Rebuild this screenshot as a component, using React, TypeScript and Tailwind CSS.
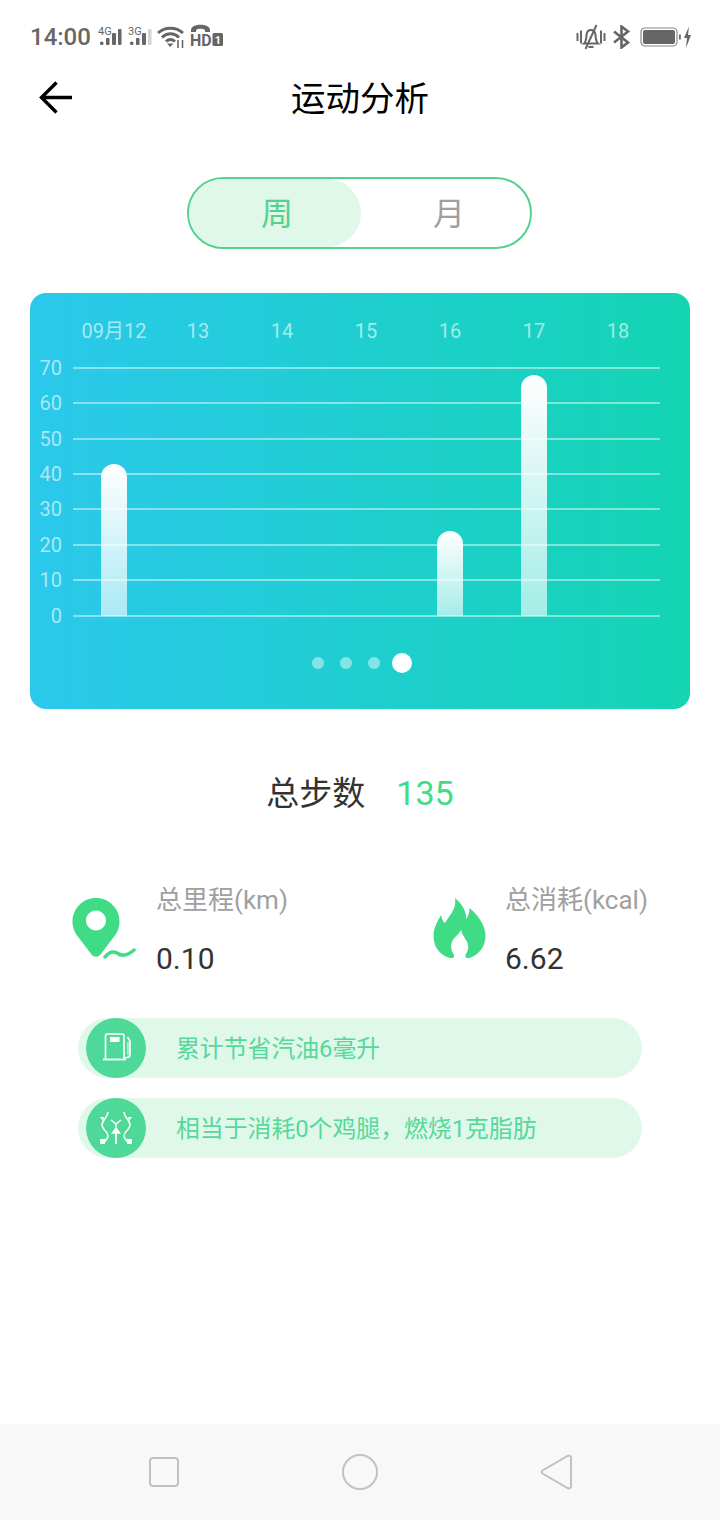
const font = "font-['Roboto','Noto_Sans_CJK_SC',sans-serif]";

const days = ['09月12', '13', '14', '15', '16', '17', '18'];
const ticks = ['70', '60', '50', '40', '30', '20', '10', '0'];
const bars = [152, 0, 0, 0, 85, 241, 0];

function Signal({ label, full }: { label: string; full: boolean }) {
  return (
    <svg width="26" height="20" viewBox="0 0 26 20">
      <text x="0" y="9" fontSize="11" fill="#666" fontFamily="Roboto">{label}</text>
      <rect x="2" y="15.500" width="3.500" height="3.500" rx="1.500" fill="#666" />
      <rect x="8" y="12" width="3.500" height="7" rx="1" fill="#666" />
      <rect x="14" y="7" width="4" height="12" rx="1" fill="#666" />
      <rect x="20" y="3" width="3.500" height="16" rx="1" fill={full ? '#666' : '#d4d4d4'} />
    </svg>
  );
}

function StatusBar() {
  return (
    <div className="h-[70px] pl-[30px] pr-[28px] pt-[4px] flex items-center justify-between">
      <div className="flex items-center">
        <span className="text-[24px] leading-none font-medium text-[#666]">14:00</span>
        <span className="ml-[7px] mt-[-3px] flex"><Signal label="4G" full /></span>
        <span className="ml-[4px] mt-[-3px] flex"><Signal label="3G" full={false} /></span>
        <svg className="ml-[3px] mt-[-1px]" width="28" height="22" viewBox="0 0 28 22" fill="none" stroke="#666" strokeWidth="3">
          <path d="M1 7C8 0.500 19 0.500 26 7" />
          <path d="M5 11.500C10 6.500 17 6.500 22 11.500" />
          <path d="M9 15.500C12 12.800 15 12.800 18 15.500" />
          <path d="M10 17.500h6.500L13.200 21z" fill="#666" stroke="none" />
          <path d="M21 14v8M25.500 14v8" strokeWidth="1.600" />
        </svg>
        <svg className="ml-[5px] mt-[-2px]" width="34" height="26" viewBox="0 0 34 26">
          <path d="M1 9V7C1 0 20 0 20 7V9h-5V7.500C15 5 6 5 6 7.500V9z" fill="#666" />
          <text x="0" y="22.500" fontSize="16" fontWeight="700" fill="#666" fontFamily="Roboto">HD</text>
          <rect x="22.500" y="10" width="10.500" height="13" rx="1.500" fill="#666" />
          <text x="24.800" y="21" fontSize="11" fontWeight="700" fill="#fff" fontFamily="Roboto">1</text>
        </svg>
      </div>
      <div className="flex items-center">
        <svg width="30" height="26" viewBox="0 0 30 26" fill="none" stroke="#666" strokeWidth="2">
          <path d="M1.500 9v8M5 6.500v13M25 6.500v13M28.500 9v8" />
          <path d="M8 19.500c2.500-2 2-5 2.600-9 .4-3 2.600-4.500 4.400-4.500s4 1.500 4.400 4.500c.6 4 .1 7 2.600 9z" />
          <path d="M12.500 23h5M20.500 1L9.500 25" />
        </svg>
        <svg className="ml-[6px]" width="20" height="24" viewBox="0 0 20 24" fill="none" stroke="#666" strokeWidth="2.600">
          <path d="M2 6.500L16 17.500L9.500 22.500V1.500L16 6.500L2 17.500" />
        </svg>
        <svg className="ml-[8px]" width="52" height="24" viewBox="0 0 52 24">
          <rect x="1" y="3" width="36" height="18" rx="4" fill="none" stroke="#888" strokeWidth="1.200" />
          <rect x="3" y="5" width="32" height="14" rx="2" fill="#666" />
          <rect x="39" y="9.500" width="1.800" height="5" fill="#666" />
          <path d="M49 1.500L44 13h3l-1 10l5-13h-3z" fill="#666" />
        </svg>
      </div>
    </div>
  );
}

function Header() {
  return (
    <div className="relative h-[56px] pt-[2px] flex items-center justify-center">
      <svg className="absolute left-[39px] top-[10px]" width="34" height="36" viewBox="0 0 34 36" fill="none" stroke="#000" strokeWidth="3.400">
        <path d="M33 17.500H3M17.500 2.500L2.500 17.500L17.500 32.500" />
      </svg>
      <span className="text-[34.500px] leading-none text-black">运动分析</span>
    </div>
  );
}

function Toggle() {
  return (
    <div className="mt-[51px] ml-[187px] w-[345px] h-[72px] rounded-full border-2 border-[#55d18e] flex overflow-hidden">
      <div className="w-[172px] pl-[4px] pt-[2px] rounded-[36px] bg-[#dff8ea] flex items-center justify-center text-[32px] text-[#55d18e]">周</div>
      <div className="flex-1 pl-[7px] pt-[2px] flex items-center justify-center text-[32px] text-[#a0a0a0]">月</div>
    </div>
  );
}

function Card() {
  return (
    <div className="mt-[44px] mx-[30px] h-[416px] rounded-[16px] bg-gradient-to-r from-[#2bc8ec] to-[#14d4b2] pt-[26px] flex flex-col">
      <div className="flex pl-[42px] h-[24px] items-center">
        {days.map((d) => (
          <span key={d} className="w-[84px] text-center text-[20px] leading-none text-white/60">{d}</span>
        ))}
      </div>
      <div className="relative mt-[7px]">
        {ticks.map((t) => (
          <div key={t} className="h-[35.430px] flex items-center">
            <span className="w-[32px] text-right text-[20px] leading-none text-white/60">{t}</span>
            <div className="ml-[11px] w-[587px] h-[2px] bg-white/45" />
          </div>
        ))}
        <div className="absolute left-[42px] bottom-[17.700px] flex items-end">
          {bars.map((h, i) => (
            <div key={i} className="w-[84px] flex justify-center">
              {h > 0 && (
                <div
                  className="w-[26px] rounded-t-[13px] bg-gradient-to-b from-white to-white/60"
                  style={{ height: h }}
                />
              )}
            </div>
          ))}
        </div>
      </div>
      <div className="mt-[20px] pl-[4px] flex justify-center items-center h-[20px]">
        <span className="w-[12px] h-[12px] rounded-full bg-white/45" />
        <span className="ml-[16px] w-[12px] h-[12px] rounded-full bg-white/45" />
        <span className="ml-[16px] w-[12px] h-[12px] rounded-full bg-white/45" />
        <span className="ml-[12px] w-[20px] h-[20px] rounded-full bg-white" />
      </div>
    </div>
  );
}

function PinIcon() {
  return (
    <svg width="64" height="64" viewBox="0 0 64 64">
      <path
        fillRule="evenodd"
        fill="#40dc85"
        d="M24 1C11 1 0.500 11.500 0.500 24.500C0.500 31 3 36.500 7 41L19.500 57.500C22 60.500 26 60.500 28.500 57.500L41 41C45 36.500 47.500 31 47.500 24.500C47.500 11.500 37 1 24 1ZM24 13.500C29.500 13.500 34 18 34 23.500S29.500 33.500 24 33.500S14 29 14 23.500S18.500 13.500 24 13.500Z"
      />
      <path d="M33 60C37 55 41 54 45 56C49 59 54 60 62 53" fill="none" stroke="#40dc85" strokeWidth="3.500" strokeLinecap="round" />
    </svg>
  );
}

function FlameIcon() {
  return (
    <svg width="54" height="62" viewBox="0 0 54 62">
      <path
        fillRule="evenodd"
        fill="#40dc85"
        d="M22 0C27 4 34 12 33 21C35 19 36.500 14 36.500 10C46 18 52.500 28 52.500 38C52.500 50 44 58 36 60C33 60.500 31.500 58.500 33 56C35 53 36 49 34.500 45C33 41 29.500 38 28 32C25.500 37 20 40 18.500 45C17.500 50 19 53.500 20.500 56C22 58.500 20.500 60.500 17.500 60C8 58 0.500 50 0.500 38C0.500 31 3 26 8 17C9 21 10 24 12 25C15 19 24 12 22 0Z"
      />
    </svg>
  );
}

function Stats() {
  return (
    <>
      <div className="mt-[60px] h-[48px] flex items-center justify-center">
        <span className="text-[33px] leading-none text-[#333]">总步数</span>
        <span className="ml-[31px] text-[34px] leading-none text-[#40dc85]">135</span>
      </div>
      <div className="mt-[65px] flex h-[110px]">
        <div className="w-[349px] pl-[72px] flex">
          <div className="pt-[15px]"><PinIcon /></div>
          <div className="ml-[20px] flex flex-col pt-[3px]">
            <span className="text-[26px] leading-[30px] text-[#a0a0a0]">总里程(km)</span>
            <span className="mt-[27px] text-[30px] leading-[34px] text-[#333]">0.10</span>
          </div>
        </div>
        <div className="flex-1 pl-[84px] flex">
          <div className="pt-[16px]"><FlameIcon /></div>
          <div className="ml-[18px] flex flex-col pt-[3px]">
            <span className="text-[26px] leading-[30px] text-[#a0a0a0]">总消耗(kcal)</span>
            <span className="mt-[27px] text-[30px] leading-[34px] text-[#333]">6.62</span>
          </div>
        </div>
      </div>
    </>
  );
}

function FuelIcon() {
  return (
    <svg width="32" height="32" viewBox="0 0 32 32" fill="none" stroke="#fff" strokeWidth="1.600">
      <path d="M5.500 27V4C5.500 2.800 6.300 2 7.500 2H22C23.200 2 24 2.800 24 4V27" />
      <path d="M3 27.500H26" strokeWidth="1.800" />
      <rect x="10" y="5" width="9.500" height="5" fill="#fff" stroke="none" />
      <path d="M24 25.500H27C29 25.500 30 24.500 30 22.500V9L27.500 5" />
      <path d="M26.800 10h3v13h-3z" fill="#fff" fillOpacity="0.5" stroke="none" />
    </svg>
  );
}

function BodyIcon() {
  return (
    <svg width="32" height="32" viewBox="0 0 32 32" fill="none" stroke="#fff" strokeWidth="1.500">
      <path d="M8 0C8 5 2 8 2 13C2 18 8 19 8 24C8 27 6 28 4 30" />
      <path d="M24 0C24 5 30 8 30 13C30 18 24 19 24 24C24 27 26 28 28 30" />
      <path d="M16 32V17" strokeWidth="1.800" />
      <path d="M12.500 21L16 16L19.500 21z" fill="#fff" />
      <path d="M11 8L16 12L21 8M16 12v3" />
      <path d="M0 5l4 0l-1 4zM32 5l-4 0l1 4zM0 27h5v5H0zM32 27h-5v5h5z" fill="#fff" stroke="none" />
    </svg>
  );
}

function Pill({ text, icon, className }: { text: string; icon: React.ReactNode; className?: string }) {
  return (
    <div className={`mx-[78px] w-[564px] h-[60px] rounded-full bg-[#dff8ea] flex items-center ${className ?? ''}`}>
      <div className="ml-[8px] w-[60px] h-[60px] rounded-full bg-[#4fd998] flex items-center justify-center">{icon}</div>
      <span className="ml-[30px] mt-[4px] text-[23.850px] leading-none text-[#55d89a]">{text}</span>
    </div>
  );
}

function NavBar() {
  return (
    <div className="mt-auto h-[96px] bg-[#f8f8f8] flex items-center pl-[149px]">
      <div className="w-[30px] h-[30px] rounded-[4px] border-2 border-[#c2c2c2]" />
      <div className="ml-[163px] w-[36px] h-[36px] rounded-full border-2 border-[#c2c2c2]" />
      <svg className="ml-[162px]" width="34" height="38" viewBox="0 0 34 38" fill="none" stroke="#c2c2c2" strokeWidth="2">
        <path d="M2.500 17.500L27.500 3C29.500 2 31 3 31 5V33C31 35 29.500 36 27.500 35L2.500 20.500C1.300 19.800 1.300 18.200 2.500 17.500Z" />
      </svg>
    </div>
  );
}

export default function App() {
  return (
    <div className={`${font} w-[720px] h-[1520px] bg-white flex flex-col overflow-hidden`}>
      <StatusBar />
      <Header />
      <Toggle />
      <Card />
      <Stats />
      <Pill className="mt-[26px]" text="累计节省汽油6毫升" icon={<FuelIcon />} />
      <Pill className="mt-[20px]" text="相当于消耗0个鸡腿，燃烧1克脂肪" icon={<BodyIcon />} />
      <NavBar />
    </div>
  );
}
